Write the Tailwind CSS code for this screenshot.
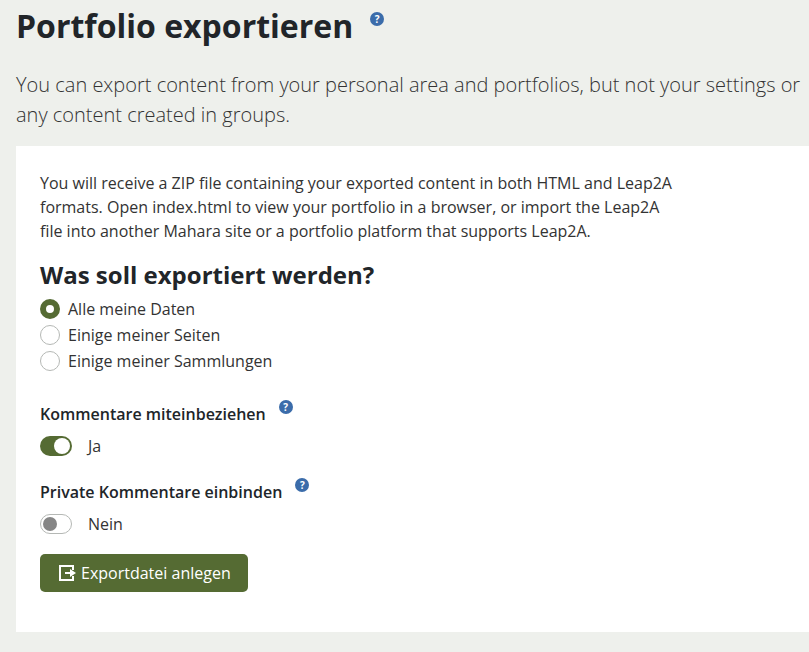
<!DOCTYPE html>
<html lang="de">
<head>
    <meta charset="utf-8" />
    <title>Portfolio exportieren</title>
    <script src="https://cdn.jsdelivr.net/npm/@tailwindcss/browser@4"></script>
</head>
<body class="h-[652px] overflow-hidden bg-[#eef0ec] font-['Open_Sans',sans-serif] text-[#212529]">
    <div class="pl-4">
        <h1 class="flex items-start h-[52px] text-[32px] leading-[52px] font-bold">
            Portfolio exportieren
            <span class="ml-[17px] mt-[12px] flex h-[14px] w-[14px] items-center justify-center rounded-full bg-[#3b6caa] text-[10px] leading-none font-bold text-white">?</span>
        </h1>
        <p class="mt-[18px] w-[790px] text-[20px] leading-[30px] font-light text-[#333]">
            You can export content from your personal area and portfolios, but not your settings or any content created in groups.
        </p>

        <div class="mt-[16px] h-[486px] bg-white pl-6 pt-[25px]">
            <p class="w-[640px] text-[16px] leading-[24px] text-[#333]">
                You will receive a ZIP file containing your exported content in both HTML and Leap2A formats. Open index.html to view your portfolio in a browser, or import the Leap2A file into another Mahara site or a portfolio platform that supports Leap2A.
            </p>

            <h2 class="mt-[16px] text-[24px] leading-[32px] font-bold">Was soll exportiert werden?</h2>

            <div class="mt-[5px] text-[16px] leading-[26px] text-[#333]">
                <label class="flex items-center gap-[8px]">
                    <span class="h-5 w-5 rounded-full border-[6px] border-[#556b33] bg-white"></span>
                    Alle meine Daten
                </label>
                <label class="flex items-center gap-[8px]">
                    <span class="h-5 w-5 rounded-full border border-[#b5b8b5] bg-white"></span>
                    Einige meiner Seiten
                </label>
                <label class="flex items-center gap-[8px]">
                    <span class="h-5 w-5 rounded-full border border-[#b5b8b5] bg-white"></span>
                    Einige meiner Sammlungen
                </label>
            </div>

            <div class="mt-[28px] flex items-start text-[16px] leading-[24px] font-semibold">
                Kommentare miteinbeziehen
                <span class="ml-[13px] mt-[-2px] flex h-[14px] w-[14px] items-center justify-center rounded-full bg-[#3b6caa] text-[10px] leading-none font-bold text-white">?</span>
            </div>
            <div class="mt-[8px] flex items-center gap-[16px] text-[16px] leading-[24px] text-[#333]">
                <span class="flex h-5 w-8 items-center justify-end rounded-full bg-[#556b33] pr-[2px]">
                    <span class="h-4 w-4 rounded-full bg-white"></span>
                </span>
                Ja
            </div>

            <div class="mt-[22px] flex items-start text-[16px] leading-[24px] font-semibold">
                Private Kommentare einbinden
                <span class="ml-[13px] mt-[-2px] flex h-[14px] w-[14px] items-center justify-center rounded-full bg-[#3b6caa] text-[10px] leading-none font-bold text-white">?</span>
            </div>
            <div class="mt-[8px] flex items-center gap-[16px] text-[16px] leading-[24px] text-[#333]">
                <span class="flex h-5 w-8 items-center rounded-full border border-[#b5b8b5] bg-white pl-[2px]">
                    <span class="h-[14px] w-[14px] rounded-full bg-[#868686]"></span>
                </span>
                Nein
            </div>

            <button class="mt-[18px] flex h-[38px] w-[208px] items-center gap-[5px] rounded-[5px] bg-[#556b33] pl-[19px] text-[16px] text-white">
                <svg class="h-4 w-[17px]" viewBox="0 0 17 16">
                    <path fill="none" stroke="currentColor" stroke-width="2" d="M14 5V1H1v14h13v-4" />
                    <path fill="currentColor" d="M6 7h5V4l6 4-6 4V9H6z" />
                </svg>
                Exportdatei anlegen
            </button>
        </div>
    </div>
</body>
</html>
